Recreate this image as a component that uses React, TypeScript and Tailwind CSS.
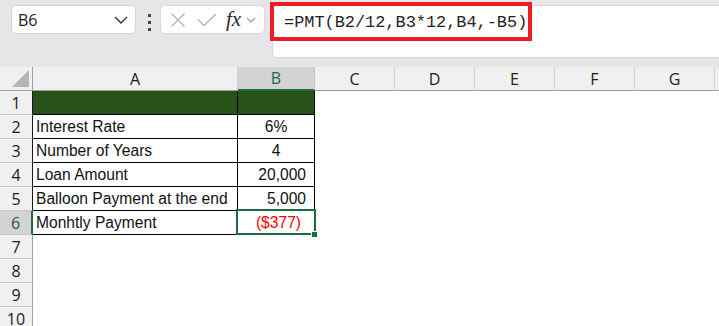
const cols = [
  { name: "A", w: "w-[205px]" },
  { name: "B", w: "w-[77px]" },
  { name: "C", w: "w-[80px]" },
  { name: "D", w: "w-[80px]" },
  { name: "E", w: "w-[80px]" },
  { name: "F", w: "w-[80px]" },
  { name: "G", w: "w-[80px]" },
];

type Row = { label: string; value: string; align: "center" | "right"; red?: boolean };

const rows: Row[] = [
  { label: "", value: "", align: "center" },
  { label: "Interest Rate", value: "6%", align: "center" },
  { label: "Number of Years", value: "4", align: "center" },
  { label: "Loan Amount", value: "20,000", align: "right" },
  { label: "Balloon Payment at the end", value: "5,000", align: "right" },
  { label: "Monhtly Payment", value: "($377)", align: "right", red: true },
];

const uiFont = "font-['Open_Sans','Liberation_Sans',sans-serif]";
const cellFont = "font-['Liberation_Sans',Arial,sans-serif]";

function FormulaBar() {
  return (
    <div className="flex h-[67px] bg-[#e8e5e9]">
      <div className="ml-[11px] mt-[5px] flex h-[29px] w-[125px] items-center justify-between rounded-[5px] border border-[#d6d3d7] bg-white pl-[6px] pr-[6px]">
        <span className={`${uiFont} text-[16px] text-[#1b1b1b]`}>B6</span>
        <svg width="14" height="8" viewBox="0 0 14 8" className="mr-[1px]">
          <path d="M1 1 L7 7 L13 1" fill="none" stroke="#333" strokeWidth="1.4" />
        </svg>
      </div>
      <div className="ml-[10px] mt-[14px] flex w-[6px] flex-col items-center gap-[4px]">
        <div className="h-[3px] w-[3px] bg-[#444]" />
        <div className="h-[3px] w-[3px] bg-[#444]" />
        <div className="h-[3px] w-[3px] bg-[#444]" />
      </div>
      <div className="ml-[8px] mt-[5px] flex h-[29px] w-[105px] items-center rounded-[5px] border border-[#dcd9dd] bg-white">
        <svg width="16" height="16" viewBox="0 0 16 16" className="ml-[9px]">
          <path d="M1.5 1.5 L14.5 14.5 M14.5 1.5 L1.5 14.5" stroke="#b3b3b3" strokeWidth="1.3" />
        </svg>
        <svg width="20" height="14" viewBox="0 0 20 14" className="ml-[11px]">
          <path d="M1 6.5 L7 12.5 L19 1" fill="none" stroke="#b3b3b3" strokeWidth="1.3" />
        </svg>
        <span className="ml-[9px] font-['Liberation_Serif',serif] text-[21px] italic leading-none text-[#2a2a2a]">
          fx
        </span>
        <svg width="10" height="6" viewBox="0 0 10 6" className="ml-[5px]">
          <path d="M1 1 L5 5 L9 1" fill="none" stroke="#999" strokeWidth="1.2" />
        </svg>
      </div>
      <div className="relative ml-[7px] mt-[5px] h-[53px] flex-1 rounded-l-[5px] border border-r-0 border-[#dcd9dd] bg-white">
        <span className="absolute left-[11px] top-[5px] font-['Liberation_Mono',monospace] text-[16.9px] leading-[24px] text-[#1f1f1f]">
          =PMT(B2/12,B3*12,B4,-B5)
        </span>
        <div className="absolute left-[-3px] top-[-4px] h-[39px] w-[262px] border-[4px] border-[#ee1d25]" />
      </div>
    </div>
  );
}

function HeaderRow() {
  return (
    <div className="flex h-[24px] bg-[#f0f0f0]">
      <div className="relative w-[33px] border-b border-r border-[#a0a0a0]">
        <svg width="17" height="17" viewBox="0 0 17 17" className="absolute bottom-[3px] right-[3px]">
          <path d="M17 0 L17 17 L0 17 Z" fill="#b4b4b4" />
        </svg>
      </div>
      {cols.map((c) => {
        const sel = c.name === "B";
        return (
          <div
            key={c.name}
            className={`${c.w} flex items-center justify-center border-r ${uiFont} text-[16px] ${
              sel
                ? "border-b-2 border-r-[#c4c4c4] border-b-[#1e6b41] bg-[#d3d3d3] text-[#1e6b41]"
                : "border-b border-r-[#d0d0d0] border-b-[#a0a0a0] text-[#1b1b1b]"
            }`}
          >
            {c.name}
          </div>
        );
      })}
      <div className="flex-1 border-b border-[#a0a0a0]" />
    </div>
  );
}

function DataRow({ n, row }: { n: number; row?: Row }) {
  const sel = n === 6;
  const inTable = !!row;
  const green = n === 1;
  return (
    <div className="flex h-[24px]">
      <div
        className={`flex w-[33px] items-center justify-center border-b ${uiFont} text-[16px] ${
          sel
            ? "border-r-2 border-r-[#1e6b41] border-b-[#c4c4c4] bg-[#d3d3d3] text-[#1e5a38]"
            : `border-r border-b-[#c8c8c8] bg-[#f0f0f0] text-[#1b1b1b] ${inTable ? "border-r-[#1b1b1b]" : "border-r-[#a0a0a0]"}`
        }`}
      >
        {n}
      </div>
      {inTable ? (
        <>
          <div
            className={`flex w-[205px] items-center border-b border-r border-black pl-[3px] pt-[1px] ${cellFont} text-[15.6px] text-[#111] ${
              green ? "bg-[#28521a]" : "bg-white"
            }`}
          >
            {row!.label}
          </div>
          <div
            className={`relative flex w-[77px] items-center border-b border-r border-black pt-[1px] ${cellFont} text-[15.6px] ${
              green ? "bg-[#28521a]" : "bg-white"
            } ${row!.align === "center" ? "justify-center" : row!.red ? "justify-end pr-[13px]" : "justify-end pr-[8px]"} ${
              row!.red ? "text-[#ff0000]" : "text-[#111]"
            }`}
          >
            {row!.value}
            {sel && (
              <>
                <div className="absolute left-[-2px] top-[-2px] h-[26px] w-[80px] border-2 border-[#1e6b41]" />
                <div className="absolute bottom-[-4px] right-[-4px] h-[7px] w-[7px] border border-white bg-[#1e6b41]" />
              </>
            )}
          </div>
        </>
      ) : (
        <div className="w-[282px] bg-white" />
      )}
      <div className="flex-1 bg-white" />
    </div>
  );
}

export default function App() {
  return (
    <div className="h-[326px] w-[719px] overflow-hidden bg-white">
      <FormulaBar />
      <HeaderRow />
      {Array.from({ length: 10 }, (_, i) => (
        <DataRow key={i} n={i + 1} row={rows[i]} />
      ))}
    </div>
  );
}
